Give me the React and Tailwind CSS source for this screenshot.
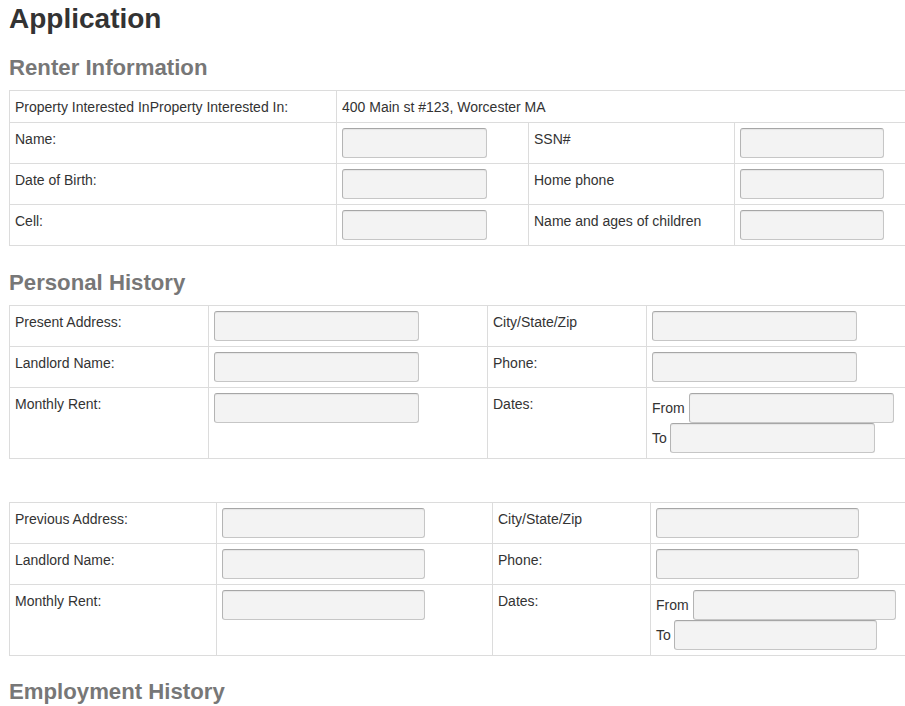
import React from "react";

const inputCls =
  "block h-[30px] rounded-[3px] border border-[#c6c6c6] border-t-[#a6a6a6] border-l-[#b4b4b4] bg-[#f3f3f3] shadow-[inset_0_1px_1px_rgba(0,0,0,0.06)]";

function Input({ w }) {
  return <div className={inputCls} style={{ width: w }} />;
}

function Cell({ w, children, grow, text }) {
  return (
    <div
      className={`shrink-0 border-l border-[#dcdcdc] px-[5px] ${text ? "pt-[6px] pb-[4px]" : "py-[5px]"} ${grow ? "flex-1" : ""}`}
      style={grow ? undefined : { width: w }}
    >
      {children}
    </div>
  );
}

function Row({ children }) {
  return <div className="flex border-t border-[#dcdcdc]">{children}</div>;
}

function Table({ children, className = "" }) {
  return (
    <div className={`ml-[9px] w-[960px] border-b border-[#dcdcdc] ${className}`}>
      {children}
    </div>
  );
}

function Dates({ w }) {
  return (
    <div className="flex flex-col">
      <div className="flex h-[30px] items-center">
        <span className="mr-[4px] leading-[21px]">From</span>
        <Input w={w} />
      </div>
      <div className="flex h-[30px] items-center">
        <span className="mr-[3px] leading-[21px]">To</span>
        <Input w={w} />
      </div>
    </div>
  );
}

function HistoryTable({ cols, inW, label, className }) {
  const [c1, c2, c3] = cols;
  return (
    <Table className={className}>
      <Row>
        <Cell w={c1} text>{label}</Cell>
        <Cell w={c2}><Input w={inW} /></Cell>
        <Cell w={c3} text>City/State/Zip</Cell>
        <Cell grow><Input w={inW} /></Cell>
      </Row>
      <Row>
        <Cell w={c1} text>Landlord Name:</Cell>
        <Cell w={c2}><Input w={inW} /></Cell>
        <Cell w={c3} text>Phone:</Cell>
        <Cell grow><Input w={inW} /></Cell>
      </Row>
      <Row>
        <Cell w={c1} text>Monthly Rent:</Cell>
        <Cell w={c2}><Input w={inW} /></Cell>
        <Cell w={c3} text>Dates:</Cell>
        <Cell grow><Dates w={inW} /></Cell>
      </Row>
    </Table>
  );
}

function H2({ children, className = "" }) {
  return (
    <h2
      className={`ml-[9px] text-[22.2px] font-bold leading-[24px] text-[#777777] ${className}`}
    >
      {children}
    </h2>
  );
}

export default function App() {
  return (
    <div
      className="h-[706px] w-[905px] overflow-hidden bg-white text-[14px] leading-[21px] text-[#333333]"
      style={{ fontFamily: '"Liberation Sans", Arial, sans-serif' }}
    >
      <h1 className="ml-[9px] mt-[3px] text-[28px] font-bold leading-[32px] text-[#333333]">
        Application
      </h1>

      <H2 className="mt-[21px]">Renter Information</H2>
      <Table className="mt-[10px]">
        <Row>
          <div className="w-[327px] shrink-0 border-l border-[#dcdcdc] px-[5px] pt-[6px] pb-[4px]">
            Property Interested InProperty Interested In:
          </div>
          <div className="flex-1 border-l border-[#dcdcdc] px-[5px] pt-[6px] pb-[4px]">
            400 Main st #123, Worcester MA
          </div>
        </Row>
        <Row>
          <Cell w={327} text>Name:</Cell>
          <Cell w={192}><Input w={145} /></Cell>
          <Cell w={206} text>SSN#</Cell>
          <Cell grow><Input w={144} /></Cell>
        </Row>
        <Row>
          <Cell w={327} text>Date of Birth:</Cell>
          <Cell w={192}><Input w={145} /></Cell>
          <Cell w={206} text>Home phone</Cell>
          <Cell grow><Input w={144} /></Cell>
        </Row>
        <Row>
          <Cell w={327} text>Cell:</Cell>
          <Cell w={192}><Input w={145} /></Cell>
          <Cell w={206} text>Name and ages of children</Cell>
          <Cell grow><Input w={144} /></Cell>
        </Row>
      </Table>

      <H2 className="mt-[25px]">Personal History</H2>
      <HistoryTable
        className="mt-[10px]"
        cols={[199, 279, 159]}
        inW={205}
        label="Present Address:"
      />

      <HistoryTable
        className="mt-[43px]"
        cols={[207, 276, 158]}
        inW={203}
        label="Previous Address:"
      />

      <H2 className="mt-[24px]">Employment History</H2>
    </div>
  );
}
